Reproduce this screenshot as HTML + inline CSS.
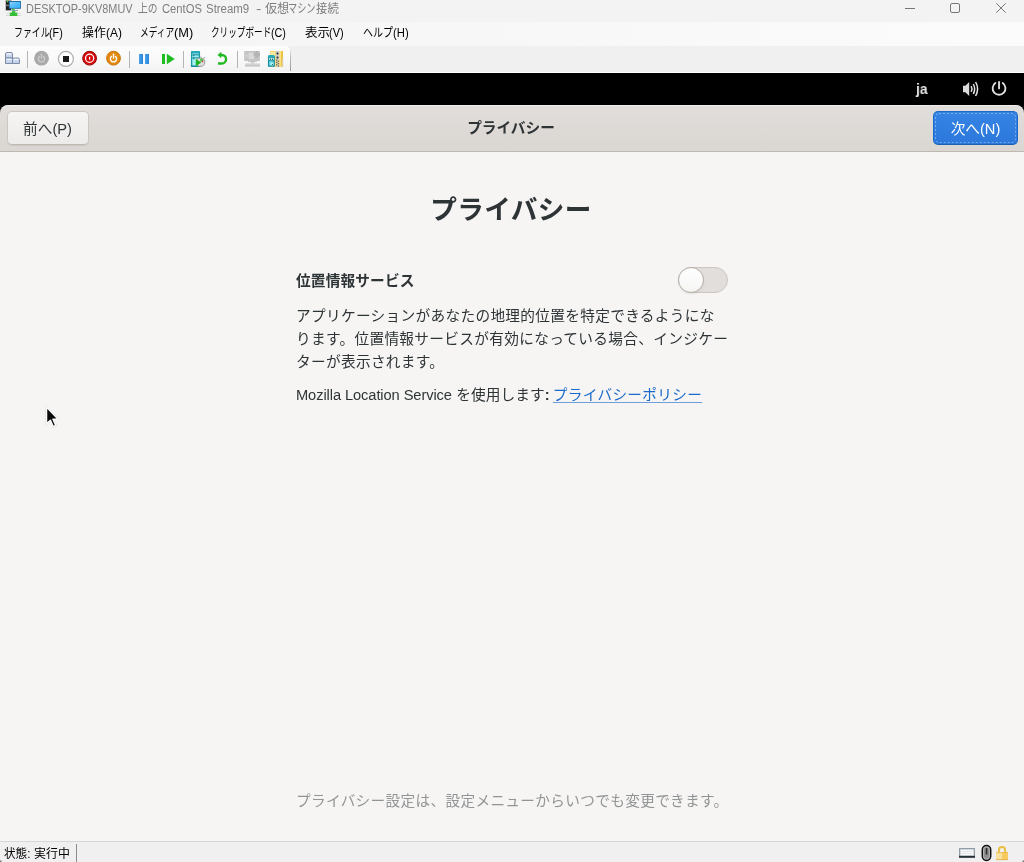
<!DOCTYPE html>
<html lang="ja">
<head>
<meta charset="utf-8">
<title>DESKTOP-9KV8MUV 上の CentOS Stream9 - 仮想マシン接続</title>
<style>
html,body{margin:0;padding:0;}
body{width:1024px;height:862px;overflow:hidden;position:relative;background:#f3f3f3;
  font-family:"Liberation Sans","Noto Sans CJK JP",sans-serif;}
.abs{position:absolute;}
#titlebar{left:0;top:0;width:1024px;height:22px;background:#f3f3f3;}
#title{top:0;width:420px;height:18px;font-size:0;white-space:nowrap;}
.tt{display:inline-block;vertical-align:top;height:18px;line-height:18px;font-size:12.5px;color:#7e7e7e;white-space:nowrap;transform-origin:0 50%;}
#menubar{left:0;top:22px;width:1024px;height:24px;background:linear-gradient(to right,#f4f4f4,#fbfbfb);}
.mitem{top:0;height:24px;font-size:0;white-space:nowrap;}
.mi{display:inline-block;vertical-align:top;height:24px;line-height:23px;font-size:12px;color:#000;white-space:nowrap;transform-origin:0 50%;}
#toolrow{left:0;top:46px;width:1024px;height:27px;background:#f0f0f0;}
#toolbar{left:0;top:0;width:290px;height:26px;background:linear-gradient(#fdfdfd,#f9f9f9 50%,#f2f2f2);border-radius:0 5px 0 0;}
#tbedge{left:290px;top:3px;width:1px;height:22px;background:linear-gradient(rgba(150,150,150,0),#bdbdbd 35%,#999);}
.sep{top:3px;width:1px;height:21px;background:#a0a0a0;}
#black{left:0;top:73px;width:1024px;height:44px;background:#000;}
#hdr{left:0;top:105px;width:1024px;height:46px;border-radius:8px 8px 0 0;
  background:linear-gradient(#e1dedb,#dad6d2);border-bottom:1px solid #bfb8b1;box-shadow:inset 0 1px rgba(255,255,255,.45);}
#content{left:0;top:152px;width:1024px;height:690px;background:#f6f5f4;}
#status{left:0;top:841px;width:1024px;height:21px;background:#f0f0f0;border-top:1px solid #d7d7d7;box-sizing:border-box;}
.g{font-family:"Liberation Sans","Noto Sans CJK JP",sans-serif;color:#2e3436;will-change:transform;}
.btn{position:absolute;will-change:transform;box-sizing:border-box;border:1px solid #cdc7c2;border-bottom-color:#bfb8b1;border-radius:5px;height:34px;line-height:35px;text-align:center;font-size:14.67px;
  background:linear-gradient(#f6f5f4,#edebe9);box-shadow:0 1px 1px rgba(0,0,0,.07);white-space:nowrap;}

.next{color:#fff;border-color:#1b6acb;border-bottom-color:#185fb4;background:linear-gradient(#3584e4,#2b78da);box-shadow:none;}
#switch{left:678px;top:267px;width:50px;height:26px;box-sizing:border-box;border:1px solid #cdc7c2;border-radius:13px;background:#e1dedb;}
#knob{position:absolute;left:-1px;top:-1px;width:26px;height:26px;box-sizing:border-box;border:1px solid #b6aea7;border-radius:13px;background:linear-gradient(#fff,#f6f5f4);box-shadow:0 1px 2px rgba(0,0,0,.08);}
#para{left:296px;top:305px;width:440px;font-size:14.67px;letter-spacing:.32px;line-height:23px;white-space:nowrap;}
#moz{left:296px;top:384px;font-size:14.67px;letter-spacing:.3px;line-height:23px;white-space:nowrap;}
.lat{letter-spacing:-.09px;word-spacing:0;}
.lnk{color:#1b6acb;text-decoration:underline;text-decoration-thickness:1px;text-underline-offset:2px;text-decoration-color:rgba(27,106,203,.62);margin-left:.2px;}
#foot{left:296px;top:790px;font-size:14.67px;letter-spacing:.32px;line-height:23px;white-space:nowrap;color:#929595;}
#sttext{top:846px;width:120px;height:17px;font-size:0;white-space:nowrap;}
.st{display:inline-block;vertical-align:top;font-size:12px;line-height:17px;color:#000;white-space:nowrap;transform-origin:0 50%;}
</style>
</head>
<body>
<div id="titlebar" class="abs"></div>
<svg class="abs" style="left:0;top:0" width="24" height="18" viewBox="0 0 24 18">
  <defs><linearGradient id="scr" x1="0" y1="0" x2="1" y2="1"><stop offset="0" stop-color="#8ed2ff"/><stop offset=".5" stop-color="#55bbff"/><stop offset="1" stop-color="#2fb0ff"/></linearGradient></defs>
  <rect x="5.2" y="0" width="6.6" height="10.6" fill="#b9b9b9"/>
  <rect x="6" y="0.8" width="5" height="9.4" fill="#222"/>
  <rect x="6" y="4.6" width="4" height="1.6" fill="#777"/>
  <circle cx="7.5" cy="1.6" r=".8" fill="#3be23b"/>
  <rect x="8.9" y="1" width="12" height="7.8" fill="#1f6ea6"/>
  <rect x="9.9" y="2" width="10.1" height="5.9" fill="url(#scr)"/>
  <rect x="12" y="8.8" width="2.6" height="1.2" fill="#3ec43e"/>
  <rect x="11.7" y="10" width="6.2" height=".9" fill="#7f93b0"/>
  <rect x="6" y="13" width="15" height=".8" fill="#dadada"/><rect x="6" y="15" width="15" height=".8" fill="#cfcfcf"/>
  <rect x="12" y="11" width="3.2" height="2" fill="#3cc43c"/>
  <rect x="9.8" y="12.6" width="7.5" height="3.4" fill="#36bf36"/>
</svg>
<div id="title" class="abs" style="left:25.83px"><span class="tt" style="width:112.48px;transform:scaleX(0.874)">DESKTOP-9KV8MUV</span> <span class="tt" style="width:24.04px;transform:scaleX(0.783)">上の</span> <span class="tt" style="width:43.59px;transform:scaleX(0.897)">CentOS</span> <span class="tt" style="width:50.31px;transform:scaleX(0.915)">Stream9</span>  <span class="tt" style="width:8.31px;transform:scaleX(1.292)">-</span> <span class="tt" style="width:23.73px;transform:scaleX(0.967)">仮想</span><span class="tt" style="width:28.28px;transform:scaleX(0.732)">マシン</span><span class="tt" style="width:60.00px;transform:scaleX(0.91)">接続</span></div>
<div id="menubar" class="abs">
  <div class="abs mitem" style="left:14.0px"><span class="mi" style="width:35.13px;transform:scaleX(0.743)">ファイル</span><span class="mi" style="width:30.00px;transform:scaleX(0.895)">(F)</span></div>
  <div class="abs mitem" style="left:82.2px"><span class="mi" style="width:23.36px;transform:scaleX(0.991)">操作</span><span class="mi" style="width:30.00px;transform:scaleX(0.993)">(A)</span></div>
  <div class="abs mitem" style="left:140.21px"><span class="mi" style="width:33.39px;transform:scaleX(0.726)">メディア</span><span class="mi" style="width:30.00px;transform:scaleX(1.067)">(M)</span></div>
  <div class="abs mitem" style="left:211.4px"><span class="mi" style="width:59.23px;transform:scaleX(0.718)">クリップボード</span><span class="mi" style="width:30.00px;transform:scaleX(0.898)">(C)</span></div>
  <div class="abs mitem" style="left:304.88px"><span class="mi" style="width:24.33px;transform:scaleX(1.037)">表示</span><span class="mi" style="width:30.00px;transform:scaleX(0.917)">(V)</span></div>
  <div class="abs mitem" style="left:362.97px"><span class="mi" style="width:29.73px;transform:scaleX(0.834)">ヘルプ</span><span class="mi" style="width:30.00px;transform:scaleX(0.938)">(H)</span></div>
</div>
<div id="toolrow" class="abs">
  <div id="toolbar" class="abs"></div><div id="tbedge" class="abs"></div><div class="abs" style="left:0;top:26px;width:1024px;height:1px;background:#fff"></div>
</div>
<svg class="abs" id="tbicons" style="left:0;top:46px" width="300" height="27" viewBox="0 0 300 27">
  <defs>
    <linearGradient id="kg" x1="0" y1="0" x2="0" y2="1"><stop offset="0" stop-color="#eef3fb"/><stop offset=".35" stop-color="#c9d7ef"/><stop offset="1" stop-color="#c3d2ec"/></linearGradient>
    <linearGradient id="bl" x1="0" y1="0" x2="1" y2="0"><stop offset="0" stop-color="#4aa3ea"/><stop offset="1" stop-color="#2787dc"/></linearGradient>
  </defs>
  <!-- ctrl-alt-del keys -->
  <g stroke="#7d8ba7" stroke-width="1" fill="url(#kg)">
    <path d="M5.5 12 V8 Q5.5 6.5 7 6.5 H11 Q12.5 6.5 12.5 8 V12 Z"/>
    <path d="M5.5 17.5 V12 H12.5 V17.5 Z"/>
    <path d="M12.5 17.5 V13.5 Q12.5 12 14 12 H18 Q19.5 12 19.5 13.5 V17.5 Z"/>
  </g>
  <g fill="#f1f5fc"><rect x="6.6" y="7.5" width="4.8" height="1.2"/><rect x="6.6" y="13" width="4.8" height="1"/><rect x="13.6" y="13" width="4.8" height="1"/></g>
  <!-- separators -->
  <g fill="#b4b4b4"><rect x="27" y="5" width="1" height="17"/><rect x="129" y="5" width="1" height="17"/><rect x="183" y="5" width="1" height="17"/><rect x="237" y="5" width="1" height="17"/></g>
  <!-- gray power -->
  <circle cx="41.5" cy="12.2" r="7.4" fill="#a9a9a9"/>
  <g fill="none" stroke="#cbcbcb" stroke-width="1.4" stroke-linecap="round"><path d="M39.5 10.4 A3.1 3.1 0 1 0 43.5 10.4"/><path d="M41.5 8.2 V12.3"/></g>
  <!-- stop -->
  <circle cx="65.9" cy="12.9" r="7.5" fill="#fff" stroke="#adadad" stroke-width="1.2"/>
  <rect x="63" y="10" width="6" height="6" fill="#1a1a1a"/>
  <!-- red shutdown -->
  <circle cx="89.6" cy="12.2" r="6.9" fill="#d80b0b" stroke="#930808" stroke-width="1"/>
  <circle cx="89.6" cy="12.2" r="4.1" fill="none" stroke="#fff" stroke-width="1.2"/>
  <rect x="89" y="10.8" width="1.2" height="2.8" fill="#fff"/>
  <!-- orange power -->
  <circle cx="113.5" cy="12.2" r="6.9" fill="#e3880f" stroke="#c7770c" stroke-width="1"/>
  <g fill="none" stroke="#fff" stroke-width="1.4" stroke-linecap="round"><path d="M111.5 10.4 A3.1 3.1 0 1 0 115.5 10.4"/><path d="M113.5 8.2 V12.3"/></g>
  <!-- pause -->
  <rect x="139" y="8" width="4" height="10" fill="url(#bl)"/><rect x="145" y="8" width="4" height="10" fill="url(#bl)"/>
  <!-- resume -->
  <rect x="162" y="8" width="3" height="10" fill="#1fbd1f"/><path d="M166.8 7.8 L174.8 13 L166.8 18.2 Z" fill="#1fbd1f"/>
  <!-- checkpoint -->
  <g>
    <path d="M191.6 6 H199.4 V20.3 H191.6 Z" fill="#a4eef4" stroke="#1b98a6" stroke-width="1.3"/>
    <path d="M191 7.6 V6.4 Q191 5 192.5 5 H198.5 Q200 5 200 6.4 V7.6 Z" fill="#2aa9b7"/>
    <rect x="192.3" y="8.3" width="6.6" height="1.1" fill="#1b8f9d"/><rect x="192.3" y="11.3" width="6.6" height="1.1" fill="#1b8f9d"/>
    <rect x="193" y="9.2" width="1.2" height="1" fill="#0e5f6a"/><rect x="193" y="12.2" width="1.2" height="1" fill="#0e5f6a"/>
    <rect x="191" y="19.6" width="9" height="1.4" fill="#168a99"/>
    <circle cx="200.6" cy="16.2" r="4.2" fill="#dedede" stroke="#a2a2a2" stroke-width="1.1"/>
    <path d="M203.6 12.4 L204.8 11.2 M201 11.6 V10.6" stroke="#b0b0b0" stroke-width="1.3"/>
    <path d="M200.6 16.2 L200.2 12.6 A3.6 3.6 0 0 1 203.4 14 Z" fill="#3cc03c"/>
    <circle cx="202.6" cy="15.4" r=".8" fill="#e03030"/>
    <path d="M195.8 12.9 L201.2 16.4 L195.8 20.2 Z" fill="#1fb41f"/>
  </g>
  <!-- revert -->
  <path d="M218 17.5 H221.8 A4.27 4.27 0 0 0 221.8 8.95 H220.6" fill="none" stroke="#22b822" stroke-width="2.4"/>
  <path d="M217.5 8.95 L221.3 5.7 V12.2 Z" fill="#22b822"/>
  <!-- disabled monitor -->
  <g>
    <rect x="244.2" y="5" width="15.7" height="10" fill="#c4c4c4"/>
    <rect x="248.6" y="6.6" width="5.4" height="6.6" fill="#d9d9d9"/>
    <rect x="245.2" y="8.6" width="3.4" height="3" fill="#cfcfcf"/>
    <path d="M255.4 5 H258 V7 H259.9 V10 H258 V12 H255.4 V10 H253.6 V7 H255.4 Z" fill="#b4b4b4"/>
    <rect x="251" y="15" width="3.4" height="2.6" fill="#cdcdcd"/>
    <rect x="248" y="15" width="9" height=".9" fill="#c6c6c6"/>
    <rect x="245" y="17.4" width="15" height="3.4" fill="#d2d2d2"/>
    <rect x="245" y="19" width="15" height="1" fill="#c6c6c6"/>
  </g>
  <!-- zip share -->
  <g>
    <rect x="270.2" y="5" width="12.6" height="15.8" fill="#f3cf58"/>
    <rect x="270.8" y="5.6" width="4.8" height="14.6" fill="#fae79e"/>
    <rect x="279.2" y="5" width="1.6" height="15.8" fill="#fbe48c"/>
    <rect x="281.6" y="5" width="1.2" height="15.8" fill="#e7b833"/>
    <rect x="282.4" y="12" width="1" height="8.8" fill="#dcdcdc"/>
    <rect x="275.8" y="4.8" width="3.4" height="16" fill="#cdcdcd"/>
    <g fill="#222"><circle cx="277.5" cy="7.5" r="1"/><circle cx="277.5" cy="11.4" r="1"/></g>
    <g fill="#8a6a1c"><rect x="276" y="13.4" width="1.3" height="1.2"/><rect x="277.8" y="14.6" width="1.3" height="1.2"/><rect x="276" y="15.8" width="1.3" height="1.2"/><rect x="277.8" y="17" width="1.3" height="1.2"/><rect x="276" y="18.2" width="1.3" height="1.2"/><rect x="277.8" y="19.4" width="1.3" height="1.2"/></g>
    <path d="M268.6 11 H274.2 V20.2 H268.6 Z" fill="#7be6ef" stroke="#198e9b" stroke-width="1.3"/>
    <path d="M268 11.6 V10.2 Q268 8.9 269.4 8.9 H273.4 Q274.8 8.9 274.8 10.2 V11.6 Z" fill="#2aa9b7"/>
    <rect x="269.4" y="12.2" width="4.2" height="1.7" fill="#f2feff"/>
    <rect x="270" y="12.6" width="1.2" height="1.3" fill="#0e4f58"/><rect x="272" y="12.6" width="1" height="1.3" fill="#0e4f58"/>
    <rect x="268.6" y="14.3" width="5.6" height="1" fill="#198e9b"/>
    <circle cx="272.4" cy="18.2" r="1.1" fill="#f2feff"/><circle cx="272.5" cy="18.3" r=".6" fill="#0e4f58"/>
  </g>
</svg>
<div id="black" class="abs"></div>
<div class="abs tb" style="left:916px;top:79px;font-size:15px;font-weight:bold;color:#e6e6e6;line-height:20px;transform:scaleX(.92);transform-origin:0 50%;will-change:transform;">ja</div>
<div id="hdr" class="abs"></div>
<div class="abs btn g" style="left:7px;top:111px;width:82px;text-indent:-1px;">前へ(P)</div>
<div class="abs g" style="left:411px;top:111px;width:200px;height:34px;line-height:35px;text-align:center;font-size:14.67px;font-weight:bold;">プライバシー</div>
<div class="abs btn next" style="left:933px;top:111px;width:85px;"><svg class="abs" style="left:0;top:0" width="83" height="32" viewBox="0 0 83 32"><rect x="1.5" y="1.5" width="80" height="29" rx="3.5" fill="none" stroke="#fff" stroke-opacity=".36" stroke-width="1" stroke-dasharray="2 2"/></svg>次へ(N)</div>
<div id="content" class="abs"></div>
<div class="abs g" style="left:311.4px;top:190px;width:400px;height:40px;line-height:40px;text-align:center;font-size:26.67px;letter-spacing:.33px;font-weight:bold;white-space:nowrap;">プライバシー</div>
<div class="abs g" style="left:296px;top:269px;height:24px;line-height:24px;font-size:14.67px;letter-spacing:.16px;font-weight:bold;white-space:nowrap;">位置情報サービス</div>
<div class="abs" id="switch"><div id="knob"></div></div>
<div class="abs g" id="para">アプリケーションがあなたの地理的位置を特定できるようにな<br>ります。位置情報サービスが有効になっている場合、インジケー<br>ターが表示されます。</div>
<div class="abs g" id="moz"><span class="lat">Mozilla Location Service</span> <span style="letter-spacing:.1px">を使用します</span><b style="font-weight:bold">:</b><span style="word-spacing:-1.7px"> </span><span class="lnk">プライバシーポリシー</span></div>
<div class="abs g" id="foot">プライバシー設定は、設定メニューからいつでも変更できます。</div>
<div id="status" class="abs"></div>
<div class="abs" id="sttext" style="left:4.42px"><span class="st" style="width:29.53px;transform:scaleX(0.967)">状態:</span> <span class="st" style="width:40.00px;transform:scaleX(0.996)">実行中</span></div>
<div class="abs" style="left:76px;top:844px;width:1px;height:18px;background:#8c8c8c;"></div>
<svg class="abs" style="left:894px;top:0" width="130" height="22" viewBox="0 0 130 22">
  <g fill="none" stroke="#777" stroke-width="1">
    <path d="M11 8.5 H21"/>
    <rect x="56.5" y="3.5" width="9" height="9" rx="1.5"/>
    <path d="M102.3 3.3 L111.7 12.7 M111.7 3.3 L102.3 12.7"/>
  </g>
</svg>
<svg class="abs" style="left:955px;top:76px" width="60" height="26" viewBox="0 0 60 26">
  <!-- speaker -->
  <path d="M8 9.7 H10.4 L14.2 6 V20 L10.4 16.3 H8 Z" fill="#dcdcdc"/>
  <g fill="none" stroke="#e4e4e4" stroke-width="1.5" stroke-linecap="butt">
    <path d="M16.2 10.2 Q17.8 13 16.2 15.8" />
    <path d="M18.3 8 Q21 13 18.3 18" />
    <path d="M20.6 6 Q24.6 13 20.6 20" />
  </g>
  <!-- power -->
  <g fill="none" stroke="#e0e0e0" stroke-width="1.85" stroke-linecap="round">
    <path d="M40.38 7.1 A6.4 6.4 0 1 0 47.72 7.1"/>
    <path d="M44.05 5.85 V12.4"/>
  </g>
</svg>
<svg class="abs" style="left:955px;top:843px" width="60" height="19" viewBox="0 0 60 19">
  <!-- keyboard -->
  <rect x="4.6" y="5.6" width="14.8" height="8" fill="#dde3e8" stroke="#8d99a4" stroke-width="1.1"/>
  <g fill="#ffffff">
    <rect x="6" y="7" width="1.6" height="1.3"/><rect x="8.2" y="7" width="1.6" height="1.3"/><rect x="10.4" y="7" width="1.6" height="1.3"/><rect x="12.6" y="7" width="1.6" height="1.3"/><rect x="14.8" y="7" width="1.6" height="1.3"/><rect x="17" y="7" width="1.2" height="1.3"/>
    <rect x="6" y="9" width="2.2" height="1.3"/><rect x="8.8" y="9" width="1.6" height="1.3"/><rect x="11" y="9" width="1.6" height="1.3"/><rect x="13.2" y="9" width="1.6" height="1.3"/><rect x="15.4" y="9" width="2.8" height="1.3"/>
    <rect x="6" y="11" width="1.6" height="1.2"/><rect x="8.2" y="11" width="7" height="1.2"/><rect x="15.8" y="11" width="2.4" height="1.2"/>
  </g>
  <rect x="4" y="12.8" width="16" height="2" fill="#263037"/>
  <!-- mouse -->
  <rect x="27.3" y="2.6" width="8.4" height="14.8" rx="4.1" fill="#8e8e8e" stroke="#111" stroke-width="1.5"/>
  <rect x="28.5" y="3.8" width="6" height="12.4" rx="3" fill="none" stroke="#c4c4c4" stroke-width=".7"/>
  <rect x="30.8" y="5" width="1.5" height="6.6" rx=".6" fill="#2a2a2a"/>
  <!-- lock -->
  <path d="M43.9 9.5 V7.2 A3.1 3.1 0 0 1 50.1 7.2 V9.5" fill="none" stroke="#e9bf45" stroke-width="2"/>
  <rect x="41" y="9.2" width="6" height="7.8" fill="#f7e0a0"/><rect x="47" y="9.2" width="6" height="7.8" fill="#f6ca5c"/>
  <rect x="41" y="9.2" width="12" height=".9" fill="#e9bb48"/>
  <rect x="41" y="16.2" width="12" height=".9" fill="#e2b44a"/>
</svg>
<svg class="abs" style="left:44px;top:404px" width="20" height="26" viewBox="0 0 20 26">
  <path d="M2.5 3 V19.8 L6.4 16.3 L9.2 22.6 L11.8 21.4 L9 15.3 H14.2 Z" fill="#0a0a0a" stroke="#fff" stroke-width="1.5" stroke-linejoin="round" style="filter:drop-shadow(.6px .8px .6px rgba(0,0,0,.35))"/>
</svg>
<div class="abs" style="left:0;top:857px;width:5px;height:5px;background:radial-gradient(circle at 0 100%,#4a4a4a 0,rgba(74,74,74,0) 2.6px)"></div>
<div class="abs" style="left:1019px;top:857px;width:5px;height:5px;background:radial-gradient(circle at 100% 100%,#4a4a4a 0,rgba(74,74,74,0) 2.6px)"></div>
</body>
</html>
